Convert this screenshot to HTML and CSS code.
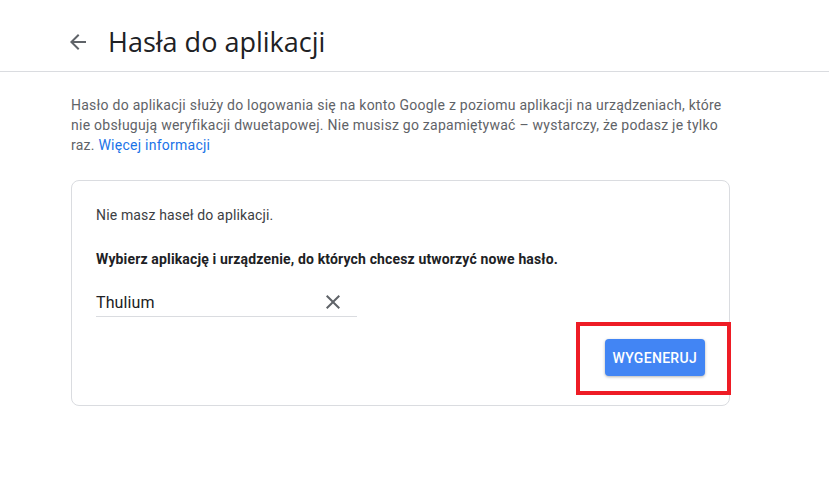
FILE: index.html
```html
<!DOCTYPE html>
<html lang="pl">
<head>
    <meta charset="UTF-8">
    <title>Hasła do aplikacji</title>
    <link rel="stylesheet" href="styles.css">
</head>
<body>
    <div class="header">
        <a class="back" href="#">
            <svg width="24" height="24" viewBox="0 0 24 24"><path d="M20 11H7.830l5.590-5.590L12 4l-8 8 8 8 1.410-1.410L7.830 13H20v-2z" fill="#5f6368"/></svg>
        </a>
        <h1>Hasła do aplikacji</h1>
    </div>

    <div class="content">
        <p class="intro">Hasło do aplikacji służy do logowania się na konto Google z poziomu aplikacji na urządzeniach, które nie obsługują weryfikacji dwuetapowej. Nie musisz go zapamiętywać – wystarczy, że podasz je tylko raz. <a href="#">Więcej informacji</a></p>

        <div class="card">
            <p class="empty">Nie masz haseł do aplikacji.</p>
            <p class="choose">Wybierz aplikację i urządzenie, do których chcesz utworzyć nowe hasło.</p>

            <div class="field">
                <span class="value">Thulium</span>
                <svg class="clear" width="24" height="24" viewBox="0 0 24 24"><path d="M19 6.410L17.590 5 12 10.590 6.410 5 5 6.410 10.590 12 5 17.590 6.410 19 12 13.410 17.590 19 19 17.590 13.410 12z" fill="#5f6368"/></svg>
            </div>

            <div class="actions">
                <button type="button">WYGENERUJ</button>
            </div>

            <div class="highlight"></div>
        </div>
    </div>
</body>
</html>
```

FILE: styles.css
```css
body {
    margin: 0;
    font-family: Roboto, Arial, sans-serif;
    background-color: #ffffff;
    color: #3c4043;
}

.header {
    display: flex;
    align-items: center;
    height: 59px;
    padding-top: 12px;
    padding-left: 66px;
    border-bottom: 1px solid #dadce0;
}

.back {
    display: flex;
    width: 24px;
    height: 24px;
}

.header h1 {
    margin: 0 0 0 18px;
    font-family: "Open Sans", Roboto, sans-serif;
    font-size: 27px;
    font-weight: 400;
    color: #202124;
}

.content {
    width: 659px;
    margin-left: 71px;
    padding-top: 23px;
}

.intro {
    margin: 0;
    font-size: 14px;
    line-height: 20px;
    letter-spacing: 0.25px;
    color: #5f6368;
}

.intro a {
    color: #1a73e8;
    text-decoration: none;
}

.card {
    position: relative;
    margin-top: 25px;
    padding: 24px 24px 29px 24px;
    border: 1px solid #dadce0;
    border-radius: 8px;
}

.card p {
    margin: 0;
    font-size: 14px;
    line-height: 20px;
    letter-spacing: 0.15px;
    color: #3c4043;
}

.card .choose {
    margin-top: 24px;
    font-weight: 700;
    color: #202124;
}

.field {
    display: flex;
    align-items: center;
    justify-content: space-between;
    width: 261px;
    height: 28px;
    padding-top: 4px;
    margin-top: 15px;
    border-bottom: 1px solid #dadce0;
}

.field .value {
    font-size: 16px;
    letter-spacing: 0.1px;
    color: #202124;
}

.clear {
    margin-right: 12px;
}

.actions {
    display: flex;
    justify-content: flex-end;
    margin-top: 22px;
}

.actions button {
    height: 37px;
    padding: 0 8px;
    border: none;
    border-radius: 4px;
    background-color: #4285f4;
    color: #ffffff;
    font-family: Roboto, Arial, sans-serif;
    font-size: 14px;
    font-weight: 500;
    letter-spacing: 0.3px;
    box-shadow: 0 1px 3px rgba(0, 0, 0, 0.3);
    cursor: pointer;
}

.highlight {
    position: absolute;
    left: 504px;
    top: 141px;
    width: 147px;
    height: 65px;
    border: 4px solid #ee1c25;
}
```
